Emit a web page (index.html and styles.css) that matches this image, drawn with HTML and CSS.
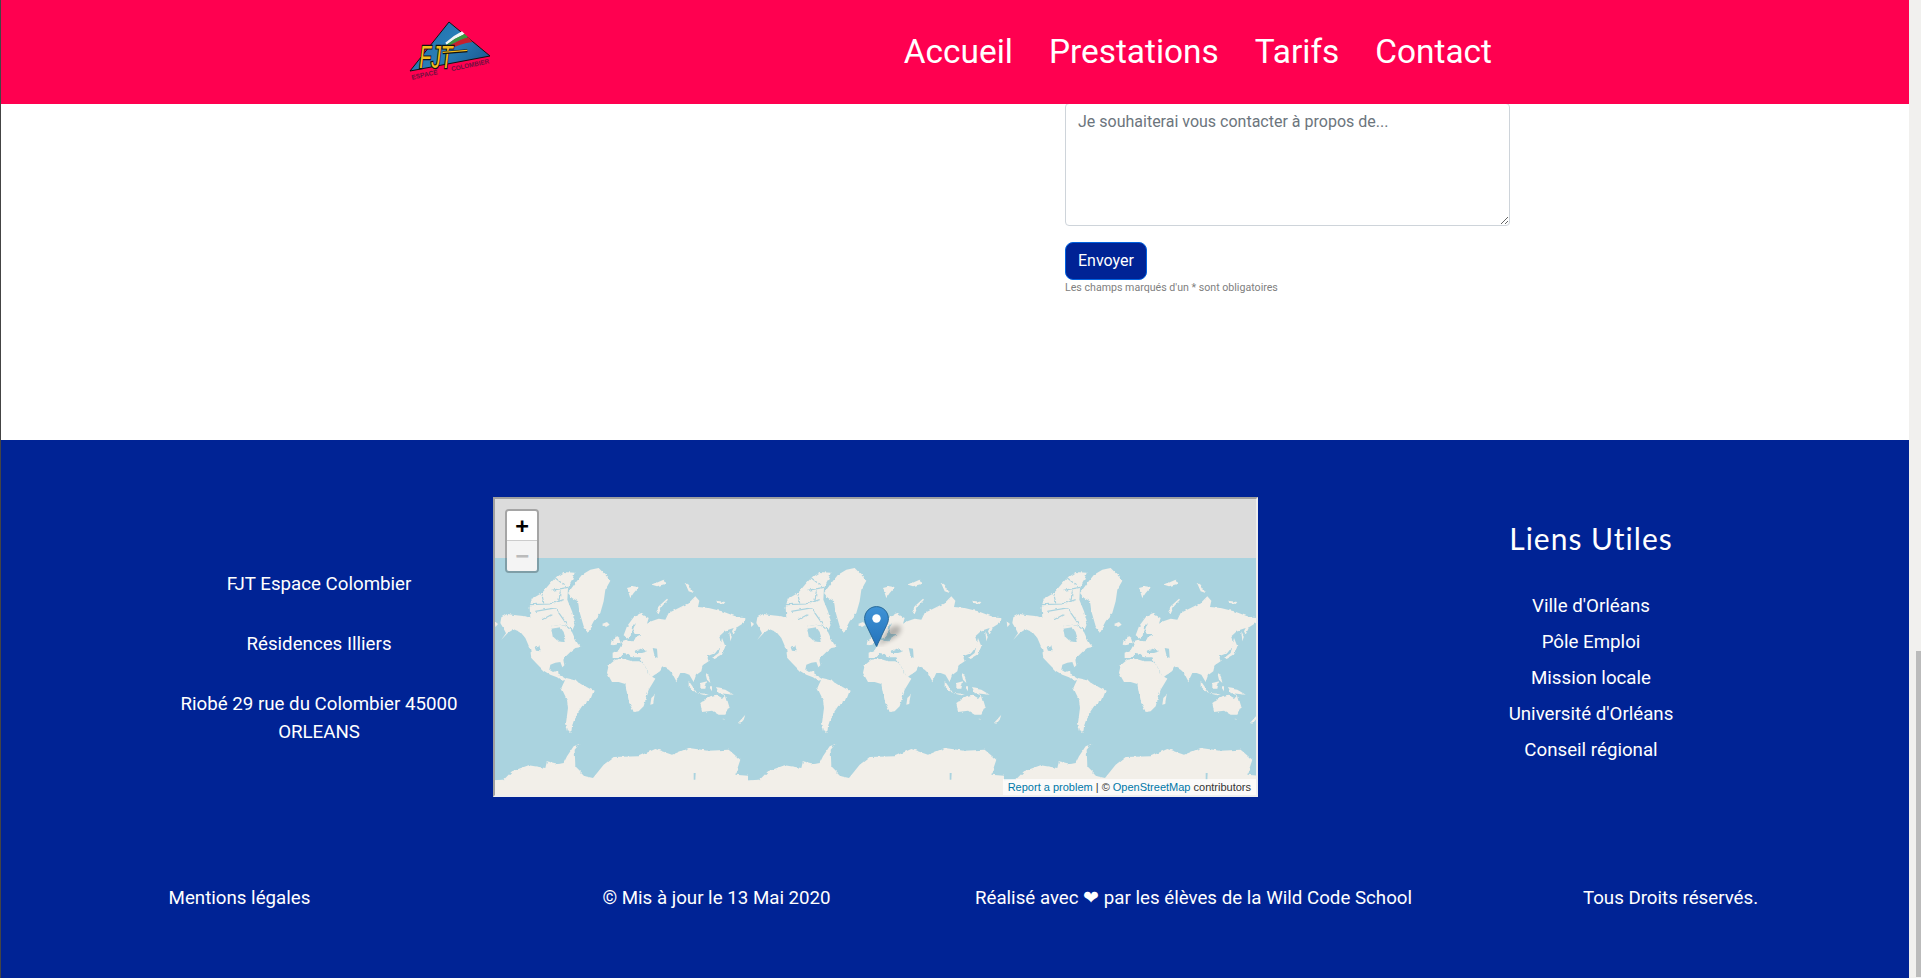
FILE: index.html
```html
<!DOCTYPE html>
<html lang="fr">
<head>
<meta charset="utf-8">
<title>FJT Espace Colombier</title>
<link rel="stylesheet" href="styles.css">
</head>
<body>
<div class="page">
  <header class="topbar">
    <a class="logo" href="#">
      <svg class="logo-svg" viewBox="0 0 300 225" width="100" height="75">
        <defs>
          <linearGradient id="tri" x1="0" y1="0" x2="1" y2="0.6">
            <stop offset="0" stop-color="#1c6aa8"/>
            <stop offset="0.6" stop-color="#2a7fb8"/>
            <stop offset="1" stop-color="#1d5f98"/>
          </linearGradient>
        </defs>
        <polygon class="logo-tri" points="147,24 270,126 30,171"/>
        <path d="M136 86Q160 65 186 52L194 60Q165 72 140 92Z" fill="#f4f4f4"/>
        <path d="M140 92Q165 72 194 60L205 70Q170 80 142 100Z" fill="#3c9a3c"/>
        <path d="M142 100Q170 80 205 70L218 84Q180 88 146 108Z" fill="#c8202c"/>
        <text class="logo-fjt" x="58" y="163" textLength="100" lengthAdjust="spacingAndGlyphs">FJT</text>
        <path class="logo-bar-back" d="M128 116L202 110"/>
        <path class="logo-bar" d="M128 115L202 109"/>
        <text class="logo-small" transform="translate(36 197) rotate(-12)" textLength="80" lengthAdjust="spacingAndGlyphs">ESPACE</text>
        <text class="logo-small" transform="translate(155 172) rotate(-12)" textLength="116" lengthAdjust="spacingAndGlyphs">COLOMBIER</text>
      </svg>
    </a>
    <nav class="nav">
      <a href="#">Accueil</a>
      <a href="#">Prestations</a>
      <a href="#">Tarifs</a>
      <a href="#">Contact</a>
    </nav>
  </header>

  <main class="content">
    <form class="form">
      <textarea class="field" placeholder="Je souhaiterai vous contacter à propos de..."></textarea>
      <button class="send" type="button">Envoyer</button>
      <small class="hint">Les champs marqués d'un * sont obligatoires</small>
    </form>
  </main>

  <footer class="footer">
    <div class="footer-top">
      <div class="address">
        <p>FJT Espace Colombier</p>
        <p>Résidences Illiers</p>
        <p>Riobé 29 rue du Colombier 45000 ORLEANS</p>
      </div>

      <div class="map">
        <svg class="tiles" width="1024" height="256" viewBox="0 0 1024 256">
          <defs>
            <filter id="soft" x="-5%" y="-5%" width="110%" height="110%">
              <feTurbulence type="fractalNoise" baseFrequency="0.07" numOctaves="2" seed="4" result="n"/>
              <feDisplacementMap in="SourceGraphic" in2="n" scale="9" xChannelSelector="R" yChannelSelector="G" result="d"/>
              <feGaussianBlur in="d" stdDeviation="0.8"/>
            </filter>
            <symbol id="world" viewBox="0 0 768 768" width="256" height="256">
              <g filter="url(#soft)">
                <g class="land">
                  <path d="M8 190L18 198L10 207Z"/>
                  <path d="M28 178L45 168L72 172L100 175L115 180L135 178L150 186L170 190L180 205L205 200L225 208L240 222L248 240L258 258L268 267L250 270L235 282L222 295L214 305L217 322L211 328L205 312L190 314L175 320L172 335L183 342L198 337L200 350L214 358L225 365L210 368L195 358L175 350L155 338L135 318L118 300L114 272L100 240L85 222L65 214L48 224L28 245L42 226L35 212L25 195Z"/>
                  <path d="M113 145L120 122L150 105L178 72L195 55L215 42L248 44L240 68L228 90L226 125L240 160L250 195L242 215L225 205L205 200L180 205L115 182Z"/>
                  <path d="M228 105L250 75L270 50L295 35L320 30L340 50L355 68L340 95L335 130L325 165L305 190L288 222L275 205L262 160L258 130L240 120Z"/>
                  <path d="M330 198L345 192L353 200L342 207Z"/>
                  <path d="M405 90L425 85L440 88L425 105L415 120Z"/>
                  <path d="M480 80L515 65L520 78L495 85Z"/>
                  <path d="M492 165L500 145L525 122L528 125L510 145L500 168Z"/>
                  <path d="M578 72L590 80L605 105L590 100Z"/>
                  <path d="M672 128L700 132L695 138L678 135Z"/>
                  <path d="M362 300L362 284L380 276L392 255L385 252L405 245L420 250L395 232L405 205L425 178L445 166L470 180L465 197L478 190L500 182L520 185L530 165L560 150L590 135L610 115L622 128L618 147L650 150L690 160L730 175L765 178L755 195L735 208L725 230L720 220L725 210L700 218L682 235L688 262L670 285L645 295L650 310L632 322L628 340L612 352L605 372L592 350L578 345L565 345L553 370L540 345L530 335L510 325L505 338L478 358L465 340L450 308L445 298L420 298L410 288L395 285L380 300Z"/>
                </g>
                <g class="channels">
                  <path d="M112 140L175 138L215 125"/>
                  <path d="M175 98L228 88"/>
                  <path d="M130 160L190 150L225 200"/>
                  <path d="M150 185L178 170"/>
                  <path d="M205 100L200 135"/>
                  <path d="M150 110L155 136"/>
                  <path d="M190 60L215 80"/>
                </g>
                <g class="water">
                  <path d="M178 212L205 208L215 222L220 240L212 252L198 250L182 235Z"/>
                  <path d="M405 248L425 250L432 236L450 228L428 228L424 215L432 195L420 208L416 235Z"/>
                  <path d="M428 278L445 272L468 280L450 285L430 285Z"/>
                  <path d="M482 270L495 272L497 300L488 295Z"/>
                  <path d="M380 300L395 288L410 292L420 302L445 302L448 312L400 312L370 312Z"/>
                  <path d="M452 318L460 315L492 352L482 358Z"/>
                  <path d="M128 268L142 262L146 280L132 278Z"/>
                </g>
                <g class="land">
                  <path d="M345 345L350 322L370 305L395 302L420 310L445 310L458 320L465 345L478 355L490 362L470 395L462 420L455 445L440 460L425 462L412 435L405 405L400 378L380 372L360 372Z"/>
                  <path d="M465 335L450 308L500 322L505 338L478 358Z"/>
                  <path d="M478 420L488 410L483 438L475 440Z"/>
                  <path d="M372 232L380 238L386 256L366 262L364 245Z"/>
                  <path d="M358 250L366 248L364 262L356 260Z"/>
                  <path d="M208 390L222 360L245 365L265 375L285 388L305 398L295 425L270 445L250 475L240 505L238 525L228 520L222 495L228 450L225 425Z"/>
                  <path d="M690 240L700 265L690 290L668 303L660 300L680 285Z"/>
                  <path d="M712 220L720 235L715 250Z"/>
                  <path d="M590 368L615 405L605 400L590 385Z"/>
                  <path d="M612 405L650 408L640 412Z"/>
                  <path d="M625 375L645 370L640 392L625 392Z"/>
                  <path d="M650 385L660 385L660 400Z"/>
                  <path d="M672 390L700 395L725 410L705 408L680 405Z"/>
                  <path d="M640 345L650 350L655 375L645 365Z"/>
                  <path d="M625 435L655 415L672 410L690 420L698 410L710 450L700 470L680 470L660 458L630 462Z"/>
                  <path d="M692 482L698 482L695 488Z"/>
                  <path d="M738 495L760 470L755 485L745 497Z"/>
                  <path d="M-20 668L35 665L60 640L110 622L160 630L165 610L200 618L215 615L225 595L245 565L262 558L248 575L250 625L280 655L303 660L335 620L365 597L440 595L490 573L540 590L590 570L650 578L710 575L745 605L730 650L790 655L790 790L-20 790Z"/>
                </g>
                <path class="water" d="M605 645L611 645L610 665L605 665Z"/>
              </g>
            </symbol>
          </defs>
          <use href="#world" x="0" y="0"/>
          <use href="#world" x="256" y="0"/>
          <use href="#world" x="512" y="0"/>
          <use href="#world" x="768" y="0"/>
        </svg>

        <svg class="marker" viewBox="0 0 52 41" width="52" height="41">
          <defs>
            <linearGradient id="pin" x1="0" y1="0" x2="0" y2="1">
              <stop offset="0" stop-color="#3f93d6"/>
              <stop offset="1" stop-color="#2473bb"/>
            </linearGradient>
            <filter id="shade" x="-50%" y="-50%" width="200%" height="200%"><feGaussianBlur stdDeviation="2.6"/></filter>
          </defs>
          <path class="marker-shadow" d="M13 40L24 24Q31 17 37 21Q38 28 28 33Z" filter="url(#shade)"/>
          <path class="marker-pin" d="M12.5 .6C5.8 .6 .6 6 .6 12.5C.6 15 1.3 17 2.5 19.5L12.5 40.4L22.5 19.5C23.7 17 24.4 15 24.4 12.5C24.4 6 19.2 .6 12.5 .6Z"/>
          <circle class="marker-dot" cx="12.5" cy="12.5" r="4.2"/>
        </svg>

        <div class="zoom-control">
          <a class="zoom-btn" href="#">+</a>
          <a class="zoom-btn zoom-off" href="#">−</a>
        </div>
        <div class="attribution"><a href="#">Report a problem</a> | © <a href="#">OpenStreetMap</a> contributors</div>
      </div>

      <div class="links">
        <h3 class="links-title">Liens Utiles</h3>
        <ul class="links-list">
          <li>Ville d'Orléans</li>
          <li>Pôle Emploi</li>
          <li>Mission locale</li>
          <li>Université d'Orléans</li>
          <li>Conseil régional</li>
        </ul>
      </div>
    </div>

    <div class="footer-bottom">
      <span>Mentions légales</span>
      <span>© Mis à jour le 13 Mai 2020</span>
      <span>Réalisé avec ❤ par les élèves de la Wild Code School</span>
      <span>Tous Droits réservés.</span>
    </div>
  </footer>
</div>
<div class="scrollbar"><div class="thumb"></div></div>
</body>
</html>
```
FILE: styles.css
```css
* { box-sizing: border-box; }
html, body { margin: 0; height: 978px; overflow: hidden; }
body {
  display: flex;
  font-family: Roboto, "Liberation Sans", sans-serif;
  background: #fff;
  color: #212529;
}
a { color: inherit; text-decoration: none; }

.page {
  position: relative;
  flex: 1;
  min-width: 0;
  height: 978px;
  overflow: hidden;
  border-left: 1px solid #444;
}

.scrollbar {
  width: 12px;
  height: 978px;
  background: #f1f0ee;
  padding: 651px 0 1px 7px;
}
.thumb { height: 100%; background: #bbb; }

/* header sits over the scrolled page */
.topbar {
  position: absolute;
  z-index: 2;
  top: 0;
  left: 0;
  right: 0;
  height: 104px;
  background: #ff0050;
  display: flex;
  justify-content: space-between;
  padding: 0 417px 0 399px;
}
.logo { display: block; padding-top: 14px; }
.logo-svg { display: block; }
.logo-tri { fill: url(#tri); stroke: #111; stroke-width: 3; stroke-linejoin: round; }
.logo-fjt {
  font-family: "Liberation Sans", sans-serif;
  font-style: italic;
  font-size: 92px;
  fill: #f2bd20;
  stroke: #111;
  stroke-width: 7;
  paint-order: stroke;
}
.logo-bar { stroke: #f2bd20; stroke-width: 4; fill: none; }
.logo-bar-back { stroke: #111; stroke-width: 9; fill: none; }
.logo-small {
  font-family: "Liberation Sans", sans-serif;
  font-size: 20px;
  font-weight: 700;
  fill: #70103f;
}

.nav {
  display: flex;
  align-items: center;
  gap: 36px;
  padding-bottom: 2px;
  font-size: 33.4px;
  color: #fff;
}

/* form */
.content {
  height: 440px;
  padding: 103px 0 0 1064px;
}
.form { width: 445px; }
.field {
  display: block;
  width: 445px;
  height: 123px;
  padding: 6px 12px;
  border: 1px solid #ced4da;
  border-radius: 4px;
  font: 16px/24px Roboto, sans-serif;
  color: #495057;
  overflow: auto;
}
.field::placeholder { color: #6c757d; opacity: 1; }
.send {
  display: block;
  width: 82px;
  height: 38px;
  margin-top: 16px;
  padding: 0 0 2px;
  border: 1px solid #0062e0;
  border-radius: 8px;
  background: #002395;
  color: #fff;
  font: 16px Roboto, sans-serif;
}
.hint {
  display: block;
  margin-top: 0;
  font-size: 10.64px;
  line-height: 16px;
  color: #808080;
}

/* footer */
.footer {
  height: 538px;
  background: #002395;
  color: #fff;
  font-size: 18.72px;
  padding-top: 57px;
}
.footer-top {
  display: flex;
  align-items: flex-start;
  padding-left: 149px;
}
.address {
  width: 338px;
  margin-right: 5px;
  padding-top: 73px;
  text-align: center;
  line-height: 28px;
}
.address p { margin: 0 0 32px; }

.map {
  position: relative;
  flex: none;
  width: 765px;
  height: 300px;
  overflow: hidden;
  background: #dcdcdc;
  border: 2px solid;
  border-color: #a0a0a0 #eeeeee #eeeeee #a0a0a0;
}
.tiles {
  position: absolute;
  left: -259px;
  top: 59px;
  background: #aad3df;
}
.land path { fill: #f2efe9; }
.water, .water path { fill: #aad3df; }
.channels path { fill: none; stroke: #aad3df; stroke-width: 3.5; }

.marker {
  position: absolute;
  left: 369px;
  top: 107px;
}
.marker-shadow { fill: #000; opacity: .26; }
.marker-pin { fill: url(#pin); stroke: #2a6a98; stroke-width: 1; }
.marker-dot { fill: #fff; }

.zoom-control {
  position: absolute;
  left: 10px;
  top: 10px;
  width: 34px;
  border: 2px solid rgba(0, 0, 0, .25);
  border-radius: 4px;
  background-clip: padding-box;
}
.zoom-btn {
  display: block;
  height: 30px;
  background: #fff;
  color: #000;
  text-align: center;
  font: 700 22px/30px "DejaVu Sans Mono", monospace;
  border-bottom: 1px solid #ccc;
  border-radius: 2px 2px 0 0;
}
.zoom-off {
  background: #f4f4f4;
  color: #bbb;
  border-bottom: 0;
  border-radius: 0 0 2px 2px;
}
.attribution {
  position: absolute;
  right: 0;
  bottom: 0;
  padding: 0 5px;
  background: rgba(255, 255, 255, .7);
  font: 11px/16px "Liberation Sans", sans-serif;
  color: #333;
}
.attribution a { color: #0078a8; }

.links {
  width: 400px;
  margin-left: 133px;
  padding-top: 21px;
  text-align: center;
}
.links-title {
  margin: 0 0 30px;
  font-family: Lato, sans-serif;
  font-weight: 400;
  font-size: 30px;
  line-height: 40px;
  letter-spacing: 1px;
}
.links-list {
  margin: 0;
  padding: 0;
  list-style: none;
  line-height: 36px;
}

.footer-bottom {
  display: grid;
  grid-template-columns: repeat(4, 1fr);
  margin-top: 87px;
  text-align: center;
  line-height: 28px;
}
```
